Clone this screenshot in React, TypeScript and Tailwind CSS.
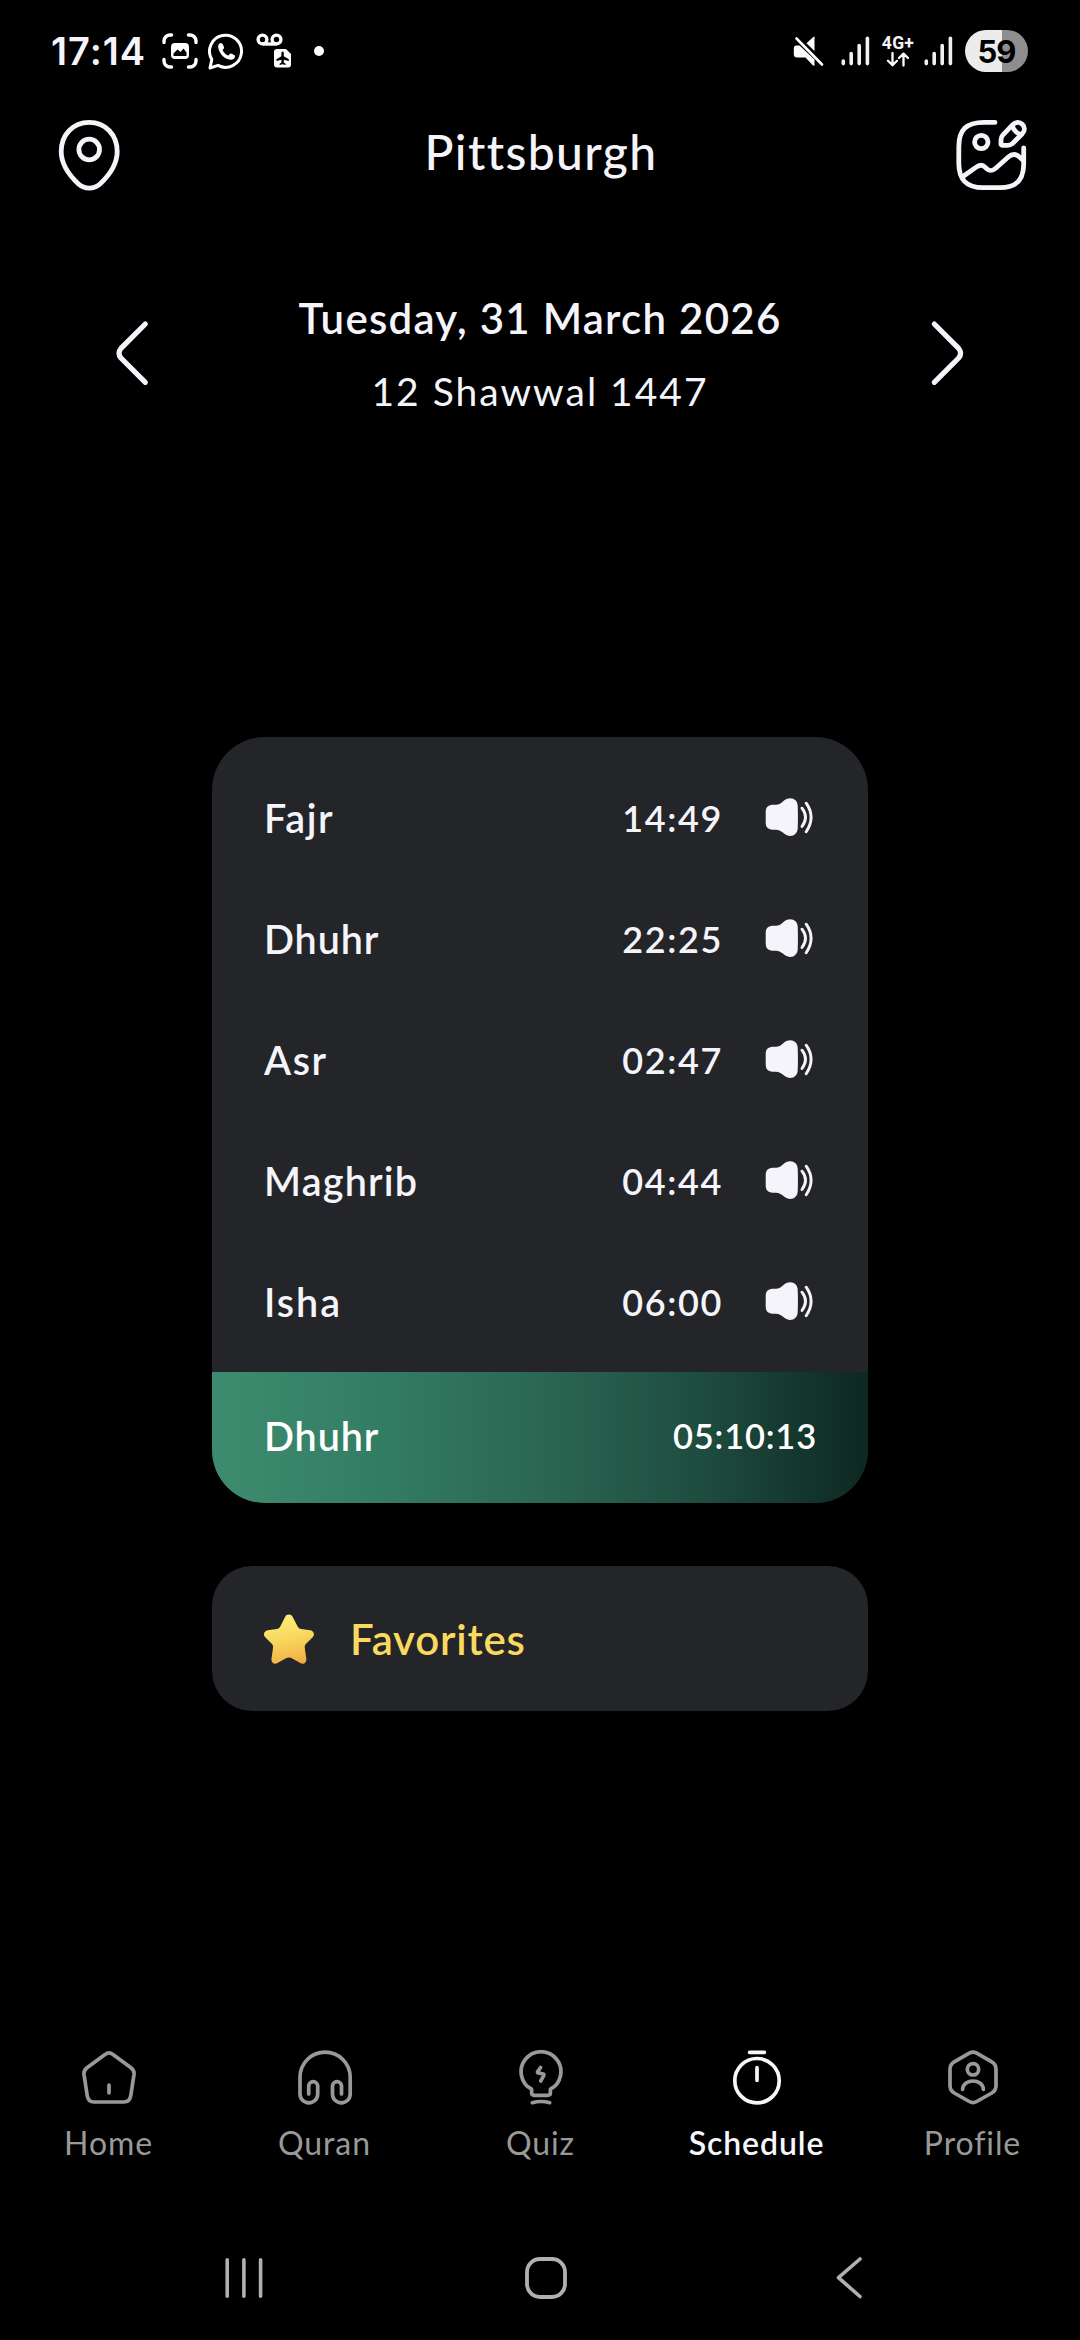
import { ReactNode } from "react";

type Prayer = { name: string; time: string; tracking: string };

const prayers: Prayer[] = [
  { name: "Fajr", time: "14:49", tracking: "tracking-[1.6px]" },
  { name: "Dhuhr", time: "22:25", tracking: "tracking-[0.9px]" },
  { name: "Asr", time: "02:47", tracking: "tracking-[1.6px]" },
  { name: "Maghrib", time: "04:44", tracking: "tracking-[1.2px]" },
  { name: "Isha", time: "06:00", tracking: "tracking-[2px]" },
];

const SignalIcon = () => (
  <svg width="30" height="30" viewBox="0 0 30 30" stroke="#f0f0f0" strokeWidth="3.6" strokeLinecap="round">
    <path d="M2.3 25v2.6M10.2 17.5v10.1M18.2 9.5v18.1" />
    <path d="M26.4 2.2v25.4" />
  </svg>
);

const StatusBar = () => (
  <div className="flex h-[102px] items-center justify-between pr-[52px] pl-[51px] font-['Inter',sans-serif]">
    <div className="flex items-center">
      <span className="w-[111px] text-[38px] leading-none font-semibold tracking-[1px]">17:14</span>
      <svg width="36" height="36" viewBox="0 0 36 36" fill="none" stroke="white" strokeWidth="3.4" strokeLinecap="round">
        <path d="M2 9.5V8a6 6 0 0 1 6-6h1.5M26.5 2H28a6 6 0 0 1 6 6v1.5M34 26.5V28a6 6 0 0 1-6 6h-1.5M9.5 34H8a6 6 0 0 1-6-6v-1.5" />
        <rect x="9" y="10" width="18" height="16" rx="4" fill="white" stroke="none" />
        <path d="M11.5 23v-2.5l4-4 3 2.5 3-3.5 3 4v3.5z" fill="black" stroke="none" />
      </svg>
      <svg className="ml-[10px]" width="37" height="37" viewBox="0 0 37 37" fill="none">
        <path d="M3.8 26.5A16 16 0 1 1 10 32.4L2 35Z" stroke="white" strokeWidth="3" strokeLinejoin="round" />
        <path
          d="M12.8 10c-1.8.4-3 2.300-2.600 4.500 1.200 6.500 6 11.500 12.300 12.300 2.300.2 4.600-1.300 4.600-3.800 0-.8-3.600-2.600-4.500-2.600-.9 0-1.700 2.200-2.500 2.100-2.200-.8-4.400-3-5.500-5.300-.1-.8 1.600-1.500 1.500-2.500-.1-.9-1.500-4.800-3.300-4.700Z"
          fill="white"
        />
      </svg>
      <svg className="ml-[11px]" width="36" height="36" viewBox="0 0 36 36" fill="none">
        <circle cx="6.5" cy="6.5" r="4.4" stroke="white" strokeWidth="3.4" />
        <circle cx="20.5" cy="6.5" r="4.4" stroke="white" strokeWidth="3.4" />
        <path d="M6.5 11h14" stroke="white" strokeWidth="3.4" />
        <path d="M21 16h9l5 5v10.500a3 3 0 0 1-3 3H21a3 3 0 0 1-3-3V19a3 3 0 0 1 3-3Z" fill="white" />
        <path
          d="M26.6 18.5c.8 0 1.200.8 1.200 1.700v3l5 3v1.800l-5-1.200v2.700l1.800 1.300v1.200l-3-.7-3 .7v-1.200l1.800-1.300v-2.700l-5 1.200v-1.800l5-3v-3c0-.9.400-1.700 1.200-1.700Z"
          fill="black"
        />
      </svg>
      <span className="ml-[22px] size-[10px] rounded-full bg-white" />
    </div>

    <div className="flex items-center">
      <svg width="31" height="31" viewBox="0 0 31 31" fill="none">
        <path d="M21.5.6v14.500L13.500 7.200 19.500 1.700Q21 .4 21.500.6Z" fill="white" />
        <path d="M3 9.500h3.500L21.500 23.500v6.300Q20.500 30 19.500 29L12.500 21.500H4Q.8 21.500.8 18V12Q.8 9.500 3 9.500Z" fill="white" />
        <path d="M3.500 2.500 29 28.500" stroke="white" strokeWidth="2.6" strokeLinecap="round" />
      </svg>
      <div className="ml-[17px]">
        <SignalIcon />
      </div>
      <div className="ml-[9px] flex w-[36px] flex-col items-center">
        <span className="font-['Roboto',sans-serif] text-[17.5px] leading-[17px] font-bold tracking-[0.3px]">4G+</span>
        <svg width="24" height="15" viewBox="0 0 24 15" fill="none" stroke="white" strokeWidth="2.3" strokeLinecap="round" strokeLinejoin="round">
          <path d="M6.5 1v12M2 8.800l4.500 4.400L11 8.800M17.500 13.500V1.600M13 6l4.500-4.400L22 6" />
        </svg>
      </div>
      <div className="ml-[8px]">
        <SignalIcon />
      </div>
      <div className="ml-[11px] flex h-[42px] w-[63px] items-center justify-center rounded-full bg-linear-to-r from-[#ececec] from-[59%] to-[#8e8e8e] to-[59%]">
        <span className="text-[31px] leading-none font-bold tracking-[-1px] text-black">59</span>
      </div>
    </div>
  </div>
);

const Header = () => (
  <header className="flex h-[106px] items-center justify-between pr-[53px] pl-[58px]">
    <svg width="62" height="72" viewBox="0 0 62 72" fill="none" stroke="#f4f4fa" strokeWidth="4.8">
      <path d="M31.2 3.4C14.8 3.4 3.2 16 3.2 32.5 3.2 46 12.5 57.5 20.5 65 26.5 70.4 36 70.4 42 65 50 57.5 59.2 46 59.2 32.5 59.2 16 47.6 3.4 31.2 3.4Z" />
      <circle cx="31.2" cy="30.5" r="10.3" />
    </svg>
    <h1 className="-mt-[7px] ml-[7px] text-[48px] leading-none font-medium tracking-[1.4px]">Pittsburgh</h1>
    <svg
      width="72"
      height="72"
      viewBox="0 0 72 72"
      fill="none"
      stroke="#f4f4fa"
      strokeWidth="4.8"
      strokeLinecap="round"
      strokeLinejoin="round"
    >
      <path d="M40 3.4H29C11 3.4 3.8 11 3.8 28V44C3.8 61 11.5 68.7 28 68.7H45C61 68.7 68.7 61 68.7 45V29" />
      <circle cx="26.3" cy="23" r="6.7" />
      <path d="M8.3 57.3 20.5 48.6C24 46 27.5 45.5 30 48.2 34 52.5 37 52.5 41 49L53 38.3C57 34.8 61 34.8 64.5 38L68.5 41.7" />
      <path d="M46 25.6 46 20.6C46 18.8 46.8 17.2 48 15.8L57.5 5.9C60.5 2.8 64.5 2.6 67.3 5.3 70.1 8 70 11.8 67.3 14.7L57.5 24.5C56 25.8 54.5 26.3 52.5 26.3L47 26.3Z" />
      <path d="M57.5 7.5C59 11.5 61 13.8 65.2 15.2" />
    </svg>
  </header>
);

const DateSwitcher = () => (
  <div className="flex h-[289px] items-center justify-between px-[112px]">
    <svg width="38" height="66" viewBox="0 0 38 66" fill="none" stroke="#f4f4fa" strokeWidth="5.2" strokeLinecap="round">
      <path d="M33.3 4 9 28.3Q5 33.2 9 38L33.3 62.3" />
    </svg>
    <div className="flex flex-col items-center pt-[2px]">
      <p className="text-[42px] leading-none font-semibold tracking-[1.27px]">Tuesday, 31 March 2026</p>
      <p className="mt-[33px] text-[39px] leading-none tracking-[2px]">12 Shawwal 1447</p>
    </div>
    <svg width="38" height="66" viewBox="0 0 38 66" fill="none" stroke="#f4f4fa" strokeWidth="5.2" strokeLinecap="round">
      <path d="M4.3 4 28.6 28.3Q32.6 33.2 28.6 38L4.3 62.3" />
    </svg>
  </div>
);

const SpeakerIcon = () => (
  <svg width="49" height="39" viewBox="0 0 49 39" fill="none">
    <path
      d="M.7 14C.7 9.5 3 7 7.5 6.7H11C16.5 6.5 18 2.5 22 .8 27.5-1.2 32.5 2 32.7 7.5 33 15 33 23 32.7 30.5 32.5 36 27.5 39.4 22 37.3 18 35.5 16.5 31.900 11 31.7H7.5C3 31.4.7 29 .7 24.5Z"
      fill="#f4f4fa"
    />
    <path d="M37 10.2Q44 19.2 37 28.5M41.2 5.2Q51 19.2 41.2 33.8" stroke="#f4f4fa" strokeWidth="2.9" strokeLinecap="round" />
  </svg>
);

const PrayerCard = () => (
  <section className="overflow-hidden rounded-[53px] bg-[#242529]">
    <div className="pt-5 pb-[10px]">
      {prayers.map((prayer) => (
        <div key={prayer.name} className="flex h-[121px] items-center pr-[54px] pl-[52px]">
          <span className={`flex-1 pt-px text-[39.5px] leading-none font-semibold ${prayer.tracking}`}>{prayer.name}</span>
          <span className="mr-[42px] pt-px text-[36px] leading-none font-semibold tracking-[1.6px]">{prayer.time}</span>
          <SpeakerIcon />
        </div>
      ))}
    </div>
    <div className="flex h-[131px] items-center justify-between bg-[linear-gradient(90deg,#3e8c70_0%,#337d64_25%,#2b6754_50%,#1e4c3e_75%,#0d2821_100%)] pr-[51px] pb-[3px] pl-[52px] text-white">
      <span className="text-[39.5px] leading-none font-semibold tracking-[0.9px]">Dhuhr</span>
      <span className="text-[34.5px] leading-none font-semibold tracking-[0.8px]">05:10:13</span>
    </div>
  </section>
);

const Favorites = () => (
  <section className="mt-[63px] flex h-[145px] items-center rounded-[40px] bg-[#242529] pl-[52px]">
    <svg width="50" height="50" viewBox="0 0 50 50">
      <defs>
        <linearGradient id="star" x1="0.4" y1="0" x2="0.6" y2="1">
          <stop offset="0" stopColor="#fdf07c" />
          <stop offset="0.5" stopColor="#f8d65c" />
          <stop offset="1" stopColor="#f2ae45" />
        </linearGradient>
      </defs>
      <path
        d="M21.2 2.7C22.6-.1 27.2-.1 28.6 2.7L33.5 12.2C34.3 13.8 35.5 14.7 37.3 15L46.2 16.3C49.8 16.9 51.2 20.7 48.7 23.3L42.3 29.5C41 30.8 40.5 32.3 40.8 34L42.3 44.5C42.9 48.8 39.6 50.8 36.3 49L27.8 44.3C25.9 43.2 23.9 43.2 22 44.3L13.5 49C10.2 50.8 6.9 48.8 7.5 44.5L9 34C9.3 32.3 8.8 30.8 7.5 29.5L1.2 23.3C-1.3 20.7.1 16.9 3.7 16.3L12.6 15C14.4 14.7 15.6 13.8 16.4 12.2Z"
        fill="url(#star)"
      />
    </svg>
    <span className="ml-[36px] text-[42px] leading-none font-semibold tracking-[0.8px] text-[#fada5e]">Favorites</span>
  </section>
);

const TabIcon = ({ children }: { children: ReactNode }) => (
  <svg
    width="56"
    height="56"
    viewBox="0 0 56 56"
    fill="none"
    stroke="currentColor"
    strokeWidth="3.7"
    strokeLinecap="round"
    strokeLinejoin="round"
  >
    {children}
  </svg>
);

const tabs = [
  {
    label: "Home",
    icon: (
      <>
        <path d="M24 4.6Q28 1.3 32 4.6L50 17.8Q53.5 20.5 53 24.5L49.8 45.5Q48.8 52 43 52H13Q7.2 52 6.2 45.5L3 24.5Q2.5 20.5 6 17.8Z" />
        <path d="M28 35.2v7.6" />
      </>
    ),
  },
  {
    label: "Quran",
    icon: (
      <path d="M11.7 44V36.2A4.5 4.5 0 0 1 20.7 36.2V44A8.85 8.85 0 0 1 3 44V27.3A25.1 25.1 0 0 1 53.2 27.3V44A8.85 8.85 0 0 1 35.5 44V36.2A4.5 4.5 0 0 1 44.5 36.2V44" />
    ),
  },
  {
    label: "Quiz",
    icon: (
      <>
        <path d="M18.6 39.2A19.9 19.9 0 1 1 37.4 39.2V42.5Q37.4 45.3 34.6 45.3H21.4Q18.6 45.3 18.6 42.5Z" />
        <path d="M19.3 52.7Q28 50.3 36.7 52.7M27.6 17.5 24.6 21.6Q24.2 22.6 25.2 22.9L30.2 24Q31.2 24.5 30.7 25.6L27.7 31" />
      </>
    ),
  },
  {
    label: "Schedule",
    active: true,
    icon: (
      <>
        <circle cx="28" cy="30.7" r="22.2" />
        <path d="M20.6 2.3h14.8M28 17.7v12.6" />
      </>
    ),
  },
  {
    label: "Profile",
    icon: (
      <>
        <path d="M24.3 3.2Q28 1.1 31.7 3.2L46.8 11.8Q51 14.3 51 19V35.8Q51 40.5 46.8 43L31.7 51.5Q28 53.6 24.3 51.5L9.2 43Q5 40.5 5 35.8V19Q5 14.3 9.2 11.8Z" />
        <circle cx="28" cy="19.3" r="5.7" />
        <path d="M17.6 39.3C18.5 28.2 37.5 28.2 38.4 39.3" />
      </>
    ),
  },
];

const TabBar = () => (
  <nav className="grid grid-cols-5">
    {tabs.map((tab) => (
      <button
        key={tab.label}
        className={`flex flex-col items-center pl-px ${tab.active ? "font-semibold text-[#f7f7fb]" : "text-[#999999]"}`}
      >
        <TabIcon>{tab.icon}</TabIcon>
        <span className="mt-[21px] text-[32px] leading-none tracking-[0.9px]">{tab.label}</span>
      </button>
    ))}
  </nav>
);

const SystemNav = () => (
  <div className="flex h-[42px] items-center justify-between pr-[217px] pl-[225px]">
    <svg width="38" height="42" viewBox="0 0 38 42" stroke="#b0b0b0" strokeWidth="3.6" strokeLinecap="round">
      <path d="M2.2 2.8v36.4M18.9 2.8v36.4M35.6 2.8v36.4" />
    </svg>
    <svg className="mr-[7px]" width="42" height="42" viewBox="0 0 42 42" fill="none" stroke="#b0b0b0" strokeWidth="3.8">
      <rect x="2" y="2" width="38" height="38" rx="13" />
    </svg>
    <svg width="27" height="42" viewBox="0 0 27 42" fill="none" stroke="#b0b0b0" strokeWidth="3.6" strokeLinecap="round" strokeLinejoin="round">
      <path d="M24 2 2.5 20.7 24 39.5" />
    </svg>
  </div>
);

export default function App() {
  return (
    <div className="flex h-[2340px] w-[1080px] flex-col bg-black font-['Lato',sans-serif] text-[#f4f4fa]">
      <StatusBar />
      <Header />
      <DateSwitcher />
      <main className="mt-60 px-[212px]">
        <PrayerCard />
        <Favorites />
      </main>
      <div className="mt-auto pb-[41px]">
        <TabBar />
        <div className="mt-[98px]">
          <SystemNav />
        </div>
      </div>
    </div>
  );
}
